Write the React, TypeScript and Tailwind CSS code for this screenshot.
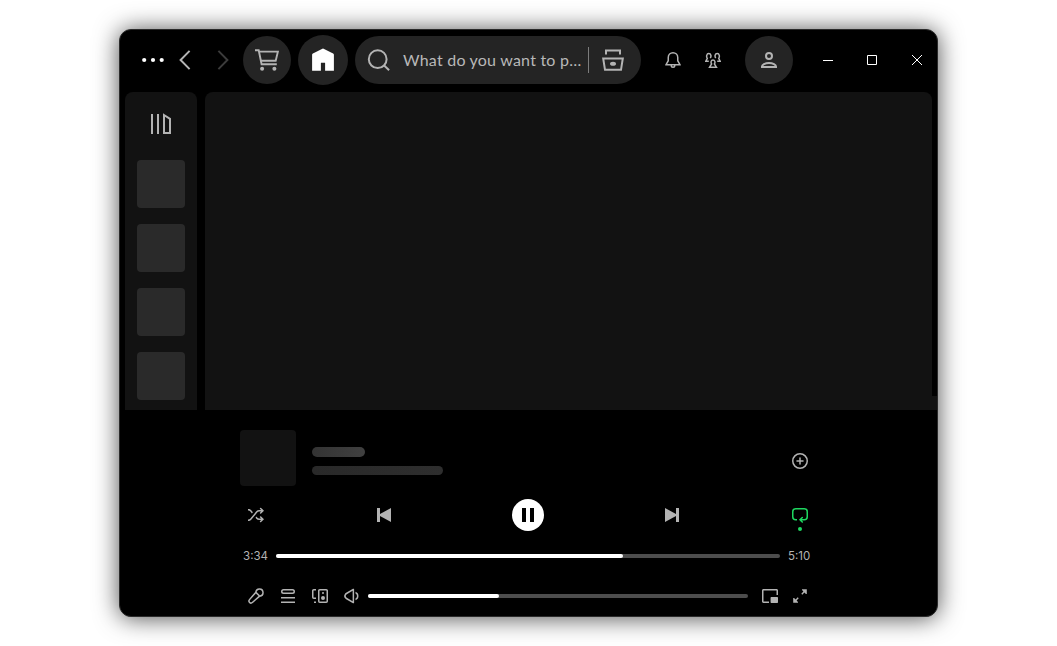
import React from "react";

const muted = "#b3b3b3";

function Glyph({ d, color = muted }: { d: string; color?: string }) {
  return (
    <svg width="16" height="16" viewBox="0 0 16 16" fill={color} className="shrink-0">
      <path d={d} />
    </svg>
  );
}

const paths = {
  bell: "M8 1.5a4 4 0 0 0-4 4v3.27a.75.75 0 0 1-.1.373L2.255 12h11.49L12.1 9.142a.75.75 0 0 1-.1-.374V5.5a4 4 0 0 0-4-4zm-5.5 4a5.5 5.5 0 0 1 11 0v3.067l2.193 3.809a.75.75 0 0 1-.65 1.124H10.5a2.5 2.5 0 0 1-5 0H.957a.75.75 0 0 1-.65-1.124L2.5 8.569V5.5zm4.5 8a1 1 0 1 0 2 0H7z",
  shuffle:
    "M13.151.922a.75.75 0 1 0-1.06 1.06L13.109 3H11.16a3.75 3.75 0 0 0-2.873 1.34l-6.173 7.356A2.25 2.25 0 0 1 .39 12.5H0V14h.391a3.75 3.75 0 0 0 2.873-1.34l6.173-7.356a2.25 2.25 0 0 1 1.724-.804h1.947l-1.017 1.018a.75.75 0 0 0 1.06 1.06L15.98 3.75 13.15.922zM.391 3.5H0V2h.391c1.109 0 2.16.49 2.873 1.34L4.89 5.277l-.979 1.167-1.796-2.14A2.25 2.25 0 0 0 .39 3.5zM7.5 10.723l.98-1.167.957 1.14a2.25 2.25 0 0 0 1.724.804h1.947l-1.017-1.018a.75.75 0 1 1 1.06-1.06l2.829 2.828-2.829 2.828a.75.75 0 1 1-1.06-1.06L13.109 13H11.16a3.75 3.75 0 0 1-2.873-1.34l-.787-.938z",
  prev: "M1 1h3v6.1L15 1v14L4 8.9V15H1z",
  next: "M15 1h-3v6.1L1 1v14l11-6.1V15h3z",
  plus: "M8 1.5a6.5 6.5 0 1 0 0 13 6.5 6.5 0 0 0 0-13zM0 8a8 8 0 1 1 16 0A8 8 0 0 1 0 8zM11.75 8a.75.75 0 0 1-.75.75H8.75V11a.75.75 0 0 1-1.5 0V8.75H5a.75.75 0 0 1 0-1.5h2.25V5a.75.75 0 0 1 1.5 0v2.25H11a.75.75 0 0 1 .75.75z",
  repeat:
    "M0 4.75A3.75 3.75 0 0 1 3.75 1h8.5A3.75 3.75 0 0 1 16 4.75v5a3.75 3.75 0 0 1-3.75 3.75H9.81l1.018 1.018a.75.75 0 1 1-1.06 1.06L6.939 12.75l2.829-2.828a.75.75 0 1 1 1.06 1.06L9.811 12h2.439a2.25 2.25 0 0 0 2.25-2.25v-5a2.25 2.25 0 0 0-2.25-2.25h-8.5A2.25 2.25 0 0 0 1.5 4.75v5A2.25 2.25 0 0 0 3.75 12H5v1.5H3.75A3.75 3.75 0 0 1 0 9.75v-5z",
  mic: "M13.426 2.574a2.831 2.831 0 0 0-4.797 1.55l3.247 3.247a2.831 2.831 0 0 0 1.55-4.797zM10.5 8.118l-2.619-2.62L4.74 9.075 2.065 12.12a1.287 1.287 0 0 0 1.816 1.816l3.06-2.688 3.56-3.129zM7.12 4.094a4.331 4.331 0 1 1 4.786 4.786l-3.974 3.493-3.06 2.689a2.787 2.787 0 0 1-3.933-3.933l2.676-3.045 3.505-3.99z",
  queue:
    "M15 15H1v-1.5h14V15zm0-4.5H1V9h14v1.5zm-14-7A2.5 2.5 0 0 1 3.5 1h9a2.5 2.5 0 0 1 0 5h-9A2.5 2.5 0 0 1 1 3.5zm2.5-1a1 1 0 0 0 0 2h9a1 1 0 1 0 0-2h-9z",
  device:
    "M6 2.75C6 1.784 6.784 1 7.75 1h6.5c.966 0 1.75.784 1.75 1.75v10.5A1.75 1.75 0 0 1 14.25 15h-6.5A1.75 1.75 0 0 1 6 13.25V2.75zm1.75-.25a.25.25 0 0 0-.25.25v10.5c0 .138.112.25.25.25h6.5a.25.25 0 0 0 .25-.25V2.75a.25.25 0 0 0-.25-.25h-6.5zm-6 0a.25.25 0 0 0-.25.25v6.5c0 .138.112.25.25.25H4V11H1.75A1.75 1.75 0 0 1 0 9.25v-6.5C0 1.784.784 1 1.75 1H4v1.5H1.75zM4 15H2v-1.5h2V15zM13 10a2 2 0 1 1-4 0 2 2 0 0 1 4 0zm-1-5a1 1 0 1 1-2 0 1 1 0 0 1 2 0z",
  volume:
    "M9.741.85a.75.75 0 0 1 .375.65v13a.75.75 0 0 1-1.125.65l-6.925-4a3.642 3.642 0 0 1-1.33-4.967 3.639 3.639 0 0 1 1.33-1.332l6.925-4a.75.75 0 0 1 .75 0zm-6.924 5.3a2.139 2.139 0 0 0 0 3.7l5.8 3.35V2.8l-5.8 3.35zm8.683 6.087a4.502 4.502 0 0 0 0-8.474v1.65a2.999 2.999 0 0 1 0 5.175v1.649z",
  mini: "M16 2.45c0-.8-.65-1.45-1.45-1.45H1.45C.65 1 0 1.65 0 2.45v11.1C0 14.35.65 15 1.45 15h5.557v-1.5H1.5v-11h13V7H16V2.45zM15.25 9.007a.75.75 0 0 1 .75.75v4.493a.75.75 0 0 1-.75.75H9.325a.75.75 0 0 1-.75-.75V9.757a.75.75 0 0 1 .75-.75h5.925z",
  expand:
    "M6.7 10.3L4.6 12.4L6 13.9V14.8H1.2V10H2.1L3.6 11.4L5.7 9.3zM9.3 5.7L11.4 3.6L10 2.1V1.2H14.8V6H13.9L12.4 4.6L10.3 6.7z",
};

function TopBar() {
  return (
    <header className="flex h-[62px] shrink-0 items-center pb-0.5 pl-[21px]">
      <svg width="24" height="24" viewBox="0 0 24 24" fill="#fff">
        <circle cx="3.2" cy="12" r="2.1" />
        <circle cx="12" cy="12" r="2.1" />
        <circle cx="20.7" cy="12" r="2.1" />
      </svg>
      <svg className="ml-2" width="24" height="24" viewBox="0 0 24 24" fill="none" stroke={muted} strokeWidth="2">
        <path d="M16.6 2.9L7.6 12L16.6 21.1" />
      </svg>
      <svg className="ml-[14px]" width="24" height="24" viewBox="0 0 24 24" fill="none" stroke="#3b3b3b" strokeWidth="2">
        <path d="M7.4 2.9L16.4 12L7.4 21.1" />
      </svg>
      <button className="ml-2 flex size-12 items-center justify-center rounded-full bg-[#242424]">
        <svg width="24" height="24" viewBox="0 0 24 24" fill="none" stroke={muted} strokeWidth="1.9">
          <path d="M0 2.2H3.7L6.6 16.3H21.8" />
          <path d="M4 3.6H22.9L20.7 12.8H5.7" />
          <circle cx="7.1" cy="20.7" r="2" fill={muted} stroke="none" />
          <circle cx="19.4" cy="20.7" r="2" fill={muted} stroke="none" />
        </svg>
      </button>
      <button className="ml-[7px] flex size-[50px] items-center justify-center rounded-full bg-[#242424]">
        <svg width="24" height="24" viewBox="0 0 24 24" fill="#fff">
          <path d="M10.9 .9Q12 .3 13.1 .9L22.1 5.5Q22.9 6 22.9 6.8V22.7H14.1V14.7H9.9V22.7H1.1V6.8Q1.1 6 1.9 5.5Z" />
        </svg>
      </button>
      <div className="ml-[7px] flex h-12 w-[286px] items-center rounded-full bg-[#242424] pl-3">
        <svg width="24" height="24" viewBox="0 0 24 24" fill="none" stroke={muted} strokeWidth="2">
          <circle cx="10.7" cy="11.2" r="8.9" />
          <path d="M16.9 17.2L22.1 22.2" />
        </svg>
        <span className="ml-3 w-[185px] whitespace-nowrap font-['Lato',sans-serif] text-base leading-6 tracking-[0.22px] text-[#b8b8b8]">
          What do you want to p…
        </span>
        <span className="h-[26px] w-px bg-[#7c7c7c]" />
        <svg className="ml-3" width="24" height="24" viewBox="0 0 24 24" fill="none" stroke={muted} strokeWidth="2">
          <path d="M5 6.6V2.5H19V6.6" />
          <path d="M2.2 10.4H21.8L20 21.8H4Z" />
          <ellipse cx="12" cy="15.7" rx="3" ry="2" fill={muted} stroke="none" />
        </svg>
      </div>
      <div className="ml-6 flex">
        <Glyph d={paths.bell} />
      </div>
      <svg className="ml-6" width="16" height="16" viewBox="0 0 16 16" fill="none" stroke={muted} strokeWidth="1.5">
        <path d="M3.8 9.2H.9L2.3 6.4C1.1 4.6 1.5 1.6 3.8 1.6C6.1 1.6 6.5 4.4 5.3 6.2" />
        <path d="M12.2 9.2H15.1L13.7 6.4C14.9 4.6 14.5 1.6 12.2 1.6C9.9 1.6 9.5 4.4 10.7 6.2" />
        <path d="M4.6 15.2L6.6 12C5.5 10.4 6 7.9 8 7.9C10 7.9 10.5 10.4 9.4 12L11.4 15.2Z" />
      </svg>
      <button className="ml-6 flex size-12 items-center justify-center rounded-full bg-[#242424]">
        <svg width="24" height="24" viewBox="0 0 24 24" fill="none" stroke={muted} strokeWidth="2">
          <circle cx="12" cy="8" r="3" />
          <path d="M5 19V18.4C5 16.6 8 15 12 15C16 15 19 16.6 19 18.4V19Z" />
        </svg>
      </button>
      <svg className="ml-[30px]" width="10" height="10" viewBox="0 0 10 10" fill="none" stroke="#fff">
        <path d="M0 5.5H10" />
      </svg>
      <svg className="ml-[34px]" width="10" height="10" viewBox="0 0 10 10" fill="none" stroke="#fff">
        <path d="M.5 .5H9.5V9.5H.5Z" />
      </svg>
      <svg className="ml-[35px]" width="10" height="10" viewBox="0 0 10 10" fill="none" stroke="#fff">
        <path d="M0 0L10 10M10 0L0 10" />
      </svg>
    </header>
  );
}

function Library() {
  return (
    <aside className="flex w-[72px] flex-col items-center gap-4 rounded-t-lg bg-[#121212] pt-5">
      <svg className="mb-2" width="24" height="24" viewBox="0 0 24 24" fill="none" stroke={muted} strokeWidth="2">
        <path d="M3 2V22M9 2V22M15 3L21 6.8V21H15Z" />
      </svg>
      {[0, 1, 2, 3].map((i) => (
        <div key={i} className="size-12 shrink-0 rounded bg-[#2a2a2a]" />
      ))}
    </aside>
  );
}

function Bar({ value, className }: { value: number; className: string }) {
  return (
    <div className={`h-1 overflow-hidden rounded-full bg-[#4d4d4d] ${className}`}>
      <div className="h-full rounded-r-full bg-white" style={{ width: `${value}%` }} />
    </div>
  );
}

function Player() {
  return (
    <footer className="flex flex-1 flex-col pl-[120px] pt-5">
      <div className="flex h-14 w-[568px] items-center">
        <div className="size-14 rounded bg-[#121212]" />
        <div className="ml-4 flex flex-1 flex-col gap-[9px] pt-[5px]">
          <div className="h-[10px] w-[53px] rounded-full bg-linear-to-r from-[#333] to-[#404040]" />
          <div className="h-[9px] w-[131px] rounded-full bg-linear-to-r from-[#292929] to-[#2e2e2e]" />
        </div>
        <div className="flex pt-[6px]">
          <Glyph d={paths.plus} />
        </div>
      </div>
      <div className="mt-[13px] flex h-8 w-[568px] items-center pl-2">
        <Glyph d={paths.shuffle} />
        <div className="ml-28">
          <Glyph d={paths.prev} />
        </div>
        <button className="ml-[120px] flex size-8 items-center justify-center gap-1 rounded-full bg-white">
          <span className="h-[14px] w-1 bg-black" />
          <span className="h-[14px] w-1 bg-black" />
        </button>
        <div className="ml-[120px]">
          <Glyph d={paths.next} />
        </div>
        <div className="relative ml-28">
          <Glyph d={paths.repeat} color="#1ed760" />
          <span className="absolute left-1.5 top-5 size-1 rounded-full bg-[#1ed760]" />
        </div>
      </div>
      <div className="mt-[17px] flex h-4 items-center font-['Inter',sans-serif] text-[11.5px] leading-4 text-[#b3b3b3]">
        <span className="w-7 text-right">3:34</span>
        <Bar value={68.9} className="ml-2 w-[504px]" />
        <span className="ml-2">5:10</span>
      </div>
      <div className="mt-6 flex h-4 items-center pl-2">
        <Glyph d={paths.mic} />
        <div className="ml-4"><Glyph d={paths.queue} /></div>
        <div className="ml-4"><Glyph d={paths.device} /></div>
        <div className="ml-4"><Glyph d={paths.volume} /></div>
        <Bar value={34.5} className="ml-2 w-[380px]" />
        <div className="ml-[14px]"><Glyph d={paths.mini} /></div>
        <div className="ml-[14px]"><Glyph d={paths.expand} /></div>
      </div>
    </footer>
  );
}

export default function App() {
  return (
    <div className="h-[646px] w-[1057px] overflow-hidden bg-white pl-[119px] pt-[29px]">
      <div className="flex h-[588px] w-[819px] flex-col overflow-hidden rounded-xl border border-[#2b2b2b] bg-black shadow-[0_1px_24px_rgba(0,0,0,0.7)]">
        <TopBar />
        <div className="flex h-[318px] shrink-0 pl-[5px]">
          <Library />
          <main className="ml-2 w-[727px] rounded-t-lg bg-[#121212]" />
          <div className="flex flex-1 items-end">
            <div className="h-[14px] w-full bg-[#121212]" />
          </div>
        </div>
        <Player />
      </div>
    </div>
  );
}
